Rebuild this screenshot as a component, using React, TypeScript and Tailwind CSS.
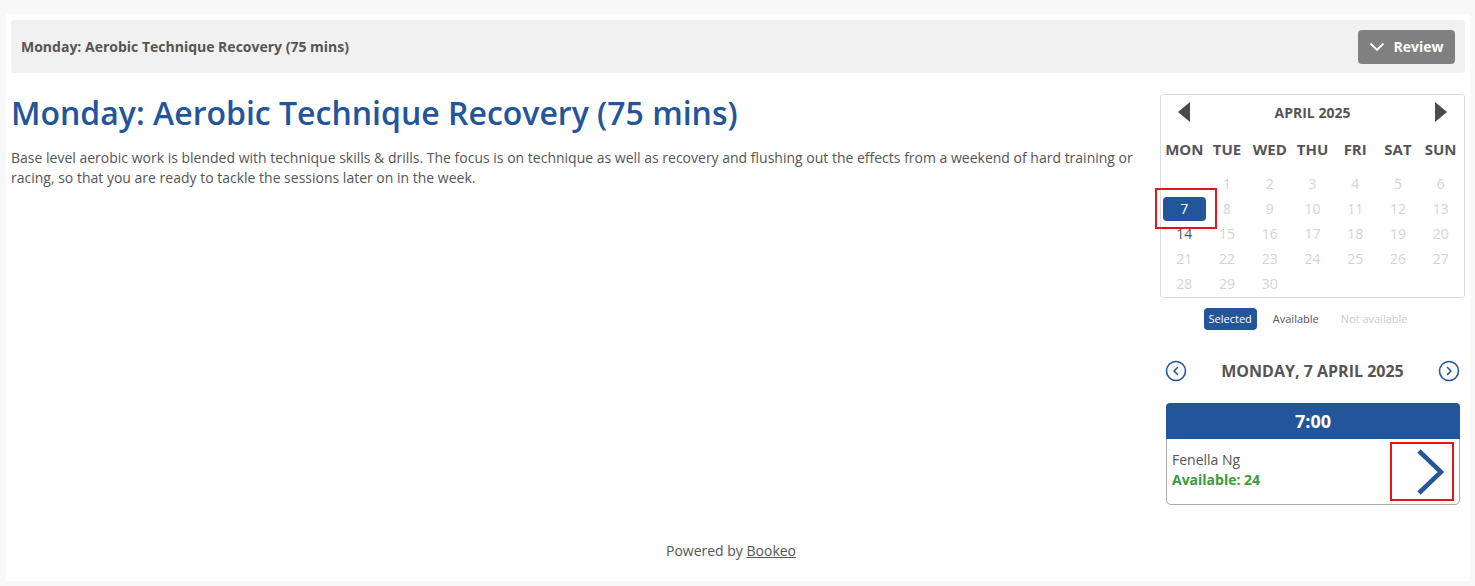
import React from 'react';

const BLUE = 'text-[#23559a]';

function CircleArrow({ dir }: { dir: 'left' | 'right' }) {
  return (
    <svg width="22" height="22" viewBox="0 0 22 22" fill="none">
      <circle cx="11" cy="11" r="9.5" stroke="#23559a" strokeWidth="1.6" />
      {dir === 'left' ? (
        <path d="M12.5 7.5 9 11l3.5 3.5" stroke="#23559a" strokeWidth="1.6" strokeLinecap="round" strokeLinejoin="round" />
      ) : (
        <path d="M9.5 7.5 13 11l-3.5 3.5" stroke="#23559a" strokeWidth="1.6" strokeLinecap="round" strokeLinejoin="round" />
      )}
    </svg>
  );
}

export default function App() {
  const days = ['MON', 'TUE', 'WED', 'THU', 'FRI', 'SAT', 'SUN'];
  // April 2025 starts on a Tuesday
  const cells: (number | null)[] = [null, ...Array.from({ length: 30 }, (_, i) => i + 1)];

  return (
    <div
      className="min-h-screen bg-[#f8f8f8] pt-[14px] pl-[6px] pr-[5px] pb-[5px] text-[#555]"
      style={{ fontFamily: '"Open Sans", "Noto Sans", sans-serif' }}
    >
      <div className="bg-white px-[5px] pt-[6px] h-[567px] flex flex-col">
        {/* Top bar */}
        <div className="h-[53px] bg-[#f1f1f1] rounded-[4px] flex items-center justify-between pl-[10px] pr-[10px]">
          <div className="text-[14px] font-bold text-[#555]">Monday: Aerobic Technique Recovery (75 mins)</div>
          <button className="h-[34px] w-[97px] bg-[#808080] rounded-[4px] flex items-center justify-center gap-[8px] text-white text-[14px] font-bold">
            <svg width="16" height="10" viewBox="0 0 16 10" fill="none">
              <path d="M1.5 1.5 8 8l6.5-6.5" stroke="white" strokeWidth="1.8" />
            </svg>
            Review
          </button>
        </div>

        <div className="flex gap-[10px] mt-[21px]">
          {/* Main content */}
          <div className="flex-1 min-w-0">
            <h1 className={`text-[32px] leading-[38px] ${BLUE} font-semibold`}>
              Monday: Aerobic Technique Recovery (75 mins)
            </h1>
            <p className="mt-[16px] text-[14px] leading-[20px] text-[#555]">
              Base level aerobic work is blended with technique skills &amp; drills. The focus is on technique as well as recovery and flushing out the effects from a weekend of hard training or racing, so that you are ready to tackle the sessions later on in the week.
            </p>
          </div>

          {/* Sidebar */}
          <div className="w-[305px] shrink-0 -ml-px">
            <div className="border border-[#ddd] rounded-[3px] px-[2px] pb-[1px]">
              <div className="grid grid-cols-7 h-[34px] items-center">
                <div className="flex justify-center">
                  <svg width="12" height="20" viewBox="0 0 12 20">
                    <path d="M12 0v20L0 10z" fill="#4a4a4a" />
                  </svg>
                </div>
                <div className="col-span-5 text-center text-[14px] font-bold text-[#555]">APRIL 2025</div>
                <div className="flex justify-center">
                  <svg width="12" height="20" viewBox="0 0 12 20">
                    <path d="M0 0v20l12-10z" fill="#4a4a4a" />
                  </svg>
                </div>
              </div>
              <div className="grid grid-cols-7 h-[40px] items-center">
                {days.map((d) => (
                  <div key={d} className="text-center text-[15px] font-bold text-[#555]">{d}</div>
                ))}
              </div>
              <div className="grid grid-cols-7 pt-[2px]">
                {cells.map((n, i) => (
                  <div key={i} className="h-[25px] flex items-center justify-center text-[14px] relative">
                    {n === 7 ? (
                      <>
                        <div className="w-[45px] h-[24px] bg-[#23559a] rounded-[4px] text-white flex items-center justify-center">7</div>
                        <div className="absolute left-[-8px] right-[-11px] top-[-8px] bottom-[-8px] border-2 border-[#e8141a]" />
                      </>
                    ) : n === 14 ? (
                      <span className="text-[#555]">14</span>
                    ) : n ? (
                      <span className="text-[#d4d4d4]">{n}</span>
                    ) : null}
                  </div>
                ))}
              </div>
            </div>

            {/* Legend */}
            <div className="flex items-center justify-center gap-[16px] mt-[10px] pr-[14px] text-[11px]">
              <span className="bg-[#23559a] text-white rounded-[4px] px-[5px] h-[22px] flex items-center">Selected</span>
              <span className="text-[#555]">Available</span>
              <span className="text-[#ccc] ml-[6px]">Not available</span>
            </div>

            {/* Date nav */}
            <div className="ml-[5px] mr-[5px] mt-[29px] flex items-center justify-between">
              <CircleArrow dir="left" />
              <div className="text-[16px] font-bold text-[#555]">MONDAY, 7 APRIL 2025</div>
              <CircleArrow dir="right" />
            </div>

            {/* Slot */}
            <div className="ml-[6px] mr-[5px] mt-[20px] rounded-[5px] border border-[#aaa]">
              <div className="bg-[#23559a] h-[36px] rounded-t-[4px] -mx-px -mt-px flex items-center justify-center text-white text-[18px] font-bold">
                7:00
              </div>
              <div className="h-[65px] flex items-center justify-between pl-[5px] pr-[5px] relative">
                <div className="text-[14px] leading-[20px] -mt-[4px]">
                  <div className="text-[#555]">Fenella Ng</div>
                  <div className="text-[#3c9a3c] font-bold">Available: 24</div>
                </div>
                <div className="w-[64px] h-[59px] border-2 border-[#e8141a] flex items-center justify-end pr-[7px]">
                  <svg width="30" height="48" viewBox="0 0 30 48" fill="none">
                    <path d="M4 3 26 24 4 45" stroke="#23559a" strokeWidth="4.5" />
                  </svg>
                </div>
              </div>
            </div>
          </div>
        </div>

        <div className="mt-auto mb-[20px] pr-[14px] text-center text-[14px] text-[#555]">
          Powered by <a className="underline text-[#555]">Bookeo</a>
        </div>
      </div>
    </div>
  );
}
